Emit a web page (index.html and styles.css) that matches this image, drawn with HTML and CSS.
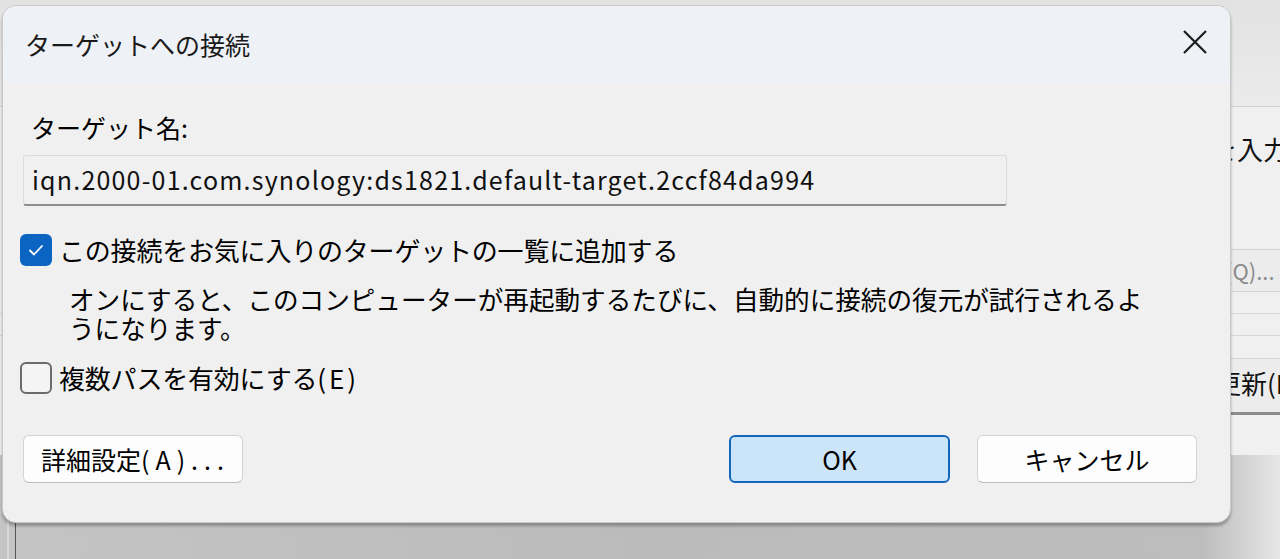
FILE: index.html
```html
<!DOCTYPE html>
<html lang="ja">
<head>
<meta charset="utf-8">
<title>ターゲットへの接続</title>
<link rel="stylesheet" href="styles.css">
</head>
<body>
<div class="desktop">
  <div class="bgwin">
    <div class="bg-top"></div>
    <div class="bg-panel">
      <div class="bg-text bg-input">を入力</div>
      <div class="bg-btn bg-dim">(Q)...</div>
      <div class="bg-line"></div>
      <div class="bg-line"></div>
      <div class="bg-btn bg-refresh">更新(R)</div>
    </div>
  </div>
  <div class="bgbottom">
    <div class="vline light"></div>
    <div class="vline dark"></div>
  </div>

  <div class="dialog">
    <div class="titlebar">
      <div class="title">ターゲットへの接続</div>
      <svg class="close" width="26" height="26" viewBox="0 0 26 26"><path d="M2 2 L24 24 M24 2 L2 24" stroke="#1c1c1c" stroke-width="2.2" fill="none"/></svg>
    </div>
    <div class="content">
      <div class="label">ターゲット名:</div>
      <div class="field">iqn.2000-01.com.synology:ds1821.default-target.2ccf84da994</div>
      <div class="check-row row1">
        <span class="box checked"><svg width="32" height="32" viewBox="0 0 32 32"><path d="M10 16.5 L14 20.5 L22 12" stroke="#fff" stroke-width="1.8" fill="none" stroke-linecap="round" stroke-linejoin="round"/></svg></span>
        <span class="check-label">この接続をお気に入りのターゲットの一覧に追加する</span>
      </div>
      <div class="desc">オンにすると、このコンピューターが再起動するたびに、自動的に接続の復元が試行されるようになります。</div>
      <div class="check-row row2">
        <span class="box"></span>
        <span class="check-label">複数パスを有効にする<span class="latin">(E)</span></span>
      </div>
      <div class="buttons">
        <div class="btn adv">詳細設定<span class="latin wide">(A)...</span></div>
        <div class="spacer"></div>
        <div class="btn ok">OK</div>
        <div class="btn cancel">キャンセル</div>
      </div>
    </div>
  </div>
</div>
</body>
</html>
```

FILE: styles.css
```css
* { box-sizing: border-box; }
html, body { margin: 0; padding: 0; }
body {
  width: 1280px;
  height: 559px;
  overflow: hidden;
  font-family: "Noto Sans CJK JP", "Noto Sans", sans-serif;
  color: #000;
  background: #bdbdbd;
}
.desktop {
  position: relative;
  width: 1280px;
  height: 559px;
  overflow: hidden;
}
.bgwin {
  position: absolute;
  left: 0;
  top: 0;
  width: 1280px;
  height: 455px;
  background: #f0f0f0;
  display: flex;
  flex-direction: column;
  overflow: hidden;
}
.bg-top {
  height: 107px;
  flex: none;
  background: linear-gradient(#e2e2e2, #ebebeb);
  border-bottom: 1px solid #d2d2d2;
}
.bg-panel {
  display: flex;
  flex-direction: column;
  font-size: 26px;
  color: #111;
  white-space: nowrap;
  width: 1400px;
}
.bg-text {
  margin-top: 22px;
  line-height: 40px;
  padding-left: 1211px;
}
.bg-btn {
  border: 1px solid #d4d4d4;
  background: #ececec;
  margin-left: 1222px;
}
.bg-dim {
  margin-top: 80px;
  height: 43px;
  line-height: 40px;
  color: #8a8a8a;
  font-size: 22px;
  padding-left: 2px;
}
.bg-line {
  height: 22px;
  flex: none;
  border-bottom: 1px solid #d6d6d6;
}
.bg-refresh {
  margin-top: 22px;
  margin-left: 1214px;
  height: 57px;
  line-height: 48px;
  border-bottom: 3px solid #8c8c8c;
}
.bgbottom {
  position: absolute;
  left: 0;
  top: 455px;
  width: 1280px;
  height: 104px;
  background: linear-gradient(90deg, #c4c4c4 0%, #bbbbbb 50%, #bdbdbd 94%, #e6e6e6 100%);
  display: flex;
  gap: 6px;
  padding-left: 7px;
}
.vline { width: 2px; height: 100%; }
.vline.light { background: #d8d8d8; }
.vline.dark { background: #555; width: 1px; }

.dialog {
  position: absolute;
  left: 2px;
  top: 5px;
  width: 1229px;
  height: 518px;
  background: #f0f0f0;
  border-radius: 14px;
  border: 1px solid #c9c9c9;
  box-shadow: 0 3px 3px rgba(0,0,0,0.28);
  overflow: hidden;
  display: flex;
  flex-direction: column;
}
.titlebar {
  height: 77px;
  flex: none;
  background: #eef1f6;
  display: flex;
  align-items: center;
  padding: 0 22px 0 22px;
}
.title {
  flex: 1;
  font-size: 25px;
  color: #1a1a1a;
  margin-top: -2px;
}
.close { margin-top: -6px; }
.content {
  display: flex;
  flex-direction: column;
  padding: 26px 0 0 17px;
}
.label {
  font-size: 25px;
  line-height: 36px;
  height: 36px;
  margin-left: 11px;
}
.field {
  margin-top: 10px;
  margin-left: 3px;
  width: 984px;
  height: 51px;
  background: #f0f0f0;
  border: 1px solid #dcdcdc;
  border-bottom: 2px solid #8e8e8e;
  border-radius: 3px;
  padding-left: 8px;
  font-size: 25px;
  line-height: 46px;
  letter-spacing: 1.2px;
  color: #111;
}
.check-row {
  display: flex;
  align-items: center;
  height: 32px;
}
.row1 { margin-top: 28px; }
.row2 { margin-top: 20px; }
.box {
  width: 32px;
  height: 32px;
  border-radius: 6px;
  border: 2px solid #6b6b6b;
  background: #f4f4f4;
  flex: none;
  display: block;
}
.box.checked {
  background: #0b63c2;
  border: none;
}
.box svg { display: block; }
.check-label {
  margin-left: 7px;
  font-size: 26px;
  line-height: 32px;
  letter-spacing: -0.2px;
}
.latin { letter-spacing: 3px; }
.latin.wide { letter-spacing: 6px; }
.desc {
  margin-top: 18px;
  margin-left: 49px;
  width: 1095px;
  font-size: 25.6px;
  line-height: 29px;
}
.buttons {
  margin-top: 41px;
  display: flex;
  padding-left: 3px;
  width: 1177px;
}
.spacer { flex: 1; }
.btn {
  height: 48px;
  border-radius: 6px;
  display: flex;
  align-items: center;
  justify-content: center;
  font-size: 25px;
}
.adv {
  width: 220px;
  background: #fdfdfd;
  border: 1px solid #d3d3d3;
  border-bottom-color: #bdbdbd;
  justify-content: flex-start;
  padding-left: 17px;
}
.ok {
  width: 221px;
  background: #cce4f7;
  border: 2px solid #1366b8;
}
.cancel {
  width: 220px;
  margin-left: 27px;
  background: #fdfdfd;
  border: 1px solid #d3d3d3;
  border-bottom-color: #bdbdbd;
}
```
